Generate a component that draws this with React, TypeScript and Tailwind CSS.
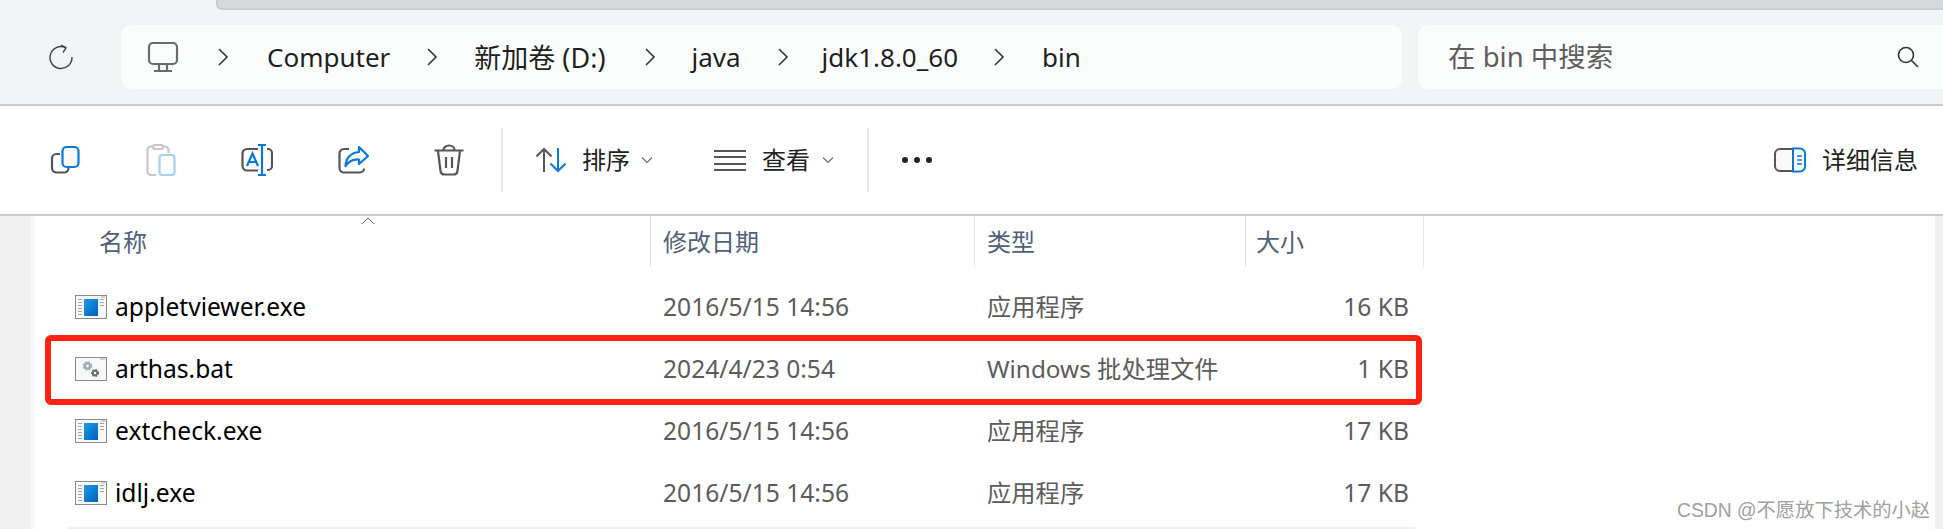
import React from "react";

const F = "font-['Noto_Sans','Noto_Sans_CJK_SC',sans-serif]";

const Chevron = ({ cls }: { cls: string }) => (
  <svg width="12" height="20" viewBox="0 0 12 20" className={cls} fill="none" stroke="#333" strokeWidth="1.6"><path d="M2 2 L10 10 L2 18" /></svg>
);
const Small = ({ cls }: { cls: string }) => (
  <svg width="12" height="8" viewBox="0 0 12 8" className={cls} fill="none" stroke="#666" strokeWidth="1.1"><path d="M1 1.5 L6 6.5 L11 1.5" /></svg>
);
const G = "#555";
const B = "#0a78d7";

const Copy = () => (
  <svg width="32" height="32" viewBox="0 0 32 32" fill="none" strokeWidth="2.2">
    <path d="M11 10 H7.5 a4.5 4.5 0 0 0 -4.5 4.5 V24 a4.5 4.5 0 0 0 4.5 4.5 H15 a4.5 4.5 0 0 0 4.5 -4.5" stroke={G} />
    <rect x="13.5" y="3" width="16" height="20" rx="4" stroke={B} fill="#fafafa" />
  </svg>
);
const Paste = () => (
  <svg width="32" height="32" viewBox="0 0 32 32" fill="none" strokeWidth="2.2">
    <path d="M11 31 H6 a3.5 3.5 0 0 1 -3.5 -3.5 V6 a3.5 3.5 0 0 1 3.5 -3.5 H20 a3.5 3.5 0 0 1 3.5 3.5 V9" stroke="#c6c6c6" />
    <rect x="8" y="1" width="10" height="4" rx="2" stroke="#c6c6c6" fill="#fff" />
    <rect x="14.5" y="11" width="15" height="20" rx="3" stroke="#a6cff2" />
  </svg>
);
const Rename = () => (
  <svg width="32" height="32" viewBox="0 0 32 32" fill="none" strokeWidth="2.2">
    <path d="M17 5 H6 a4.5 4.5 0 0 0 -4.5 4.5 V22 a4.5 4.5 0 0 0 4.5 4.5 H17" stroke={G} />
    <path d="M26 5 H27 a4 4 0 0 1 4 4 V22 a4 4 0 0 1 -4 4 H26" stroke={G} />
    <path d="M17 1 H25 M17 31 H25 M21 1 V31" stroke={B} />
    <path d="M6 22 L11.5 9.5 L17 22 M8 18 H15" stroke={B} />
  </svg>
);
const Share = () => (
  <svg width="32" height="32" viewBox="0 0 32 32" fill="none" strokeWidth="2.2">
    <path d="M12 5 H7 a4.5 4.5 0 0 0 -4.5 4.5 V24 a4.5 4.5 0 0 0 4.5 4.5 H23 a4 4 0 0 0 4 -4" stroke={G} />
    <path d="M22 3 L31 12 L22 20 V15.5 C16 15 12 17 8.5 22 C9 14 14 9 22 8 Z" stroke={B} strokeLinejoin="round" />
  </svg>
);
const Trash = () => (
  <svg width="32" height="32" viewBox="0 0 32 32" fill="none" stroke={G} strokeWidth="2.2">
    <path d="M1.5 6.5 H30.5 M10.5 6 a5.5 4.5 0 0 1 11 0" />
    <path d="M5 7 L7.5 27 a4 4 0 0 0 4 3.5 H20.5 a4 4 0 0 0 4 -3.5 L27 7" />
    <path d="M13 13 V24 M19 13 V24" />
  </svg>
);
const Sort = () => (
  <svg width="32" height="26" viewBox="0 0 32 26" fill="none" strokeWidth="2">
    <path d="M9 25 V2 M1.5 9.5 L9 2 L16.5 9.5" stroke={G} />
    <path d="M23 1 V24 M15.5 16.5 L23 24 L30.5 16.5" stroke={B} />
  </svg>
);
const ViewIcon = () => (
  <svg width="32" height="22" viewBox="0 0 32 22" fill="none" stroke={G} strokeWidth="2"><path d="M0 2 H32 M0 8 H32 M0 15 H32 M0 21 H32" /></svg>
);
const Details = () => (
  <svg width="32" height="26" viewBox="0 0 32 26" fill="none" strokeWidth="2">
    <path d="M19 2 H6 a5 5 0 0 0 -5 5 V19 a5 5 0 0 0 5 5 H19" stroke={G} fill="#fafafa" />
    <path d="M19 1.5 H26 a5 5 0 0 1 5 5 V19.5 a5 5 0 0 1 -5 5 H19 Z" stroke={B} />
    <path d="M23 9 H28 M23 13 H28 M23 17 H28" stroke={B} strokeWidth="1.6" />
  </svg>
);

const ExeIcon = () => (
  <svg width="32" height="24" viewBox="0 0 32 24" className="shrink-0">
    <defs><linearGradient id="e" x1="0" y1="0" x2="1" y2="1"><stop offset="0" stopColor="#1e9be8" /><stop offset="1" stopColor="#0060b8" /></linearGradient></defs>
    <rect x="0.5" y="0.5" width="31" height="23" fill="#f8f8f8" stroke="#8a8a8a" />
    <path d="M3 4.5 H7 M3 7.5 H7 M3 10.5 H7 M3 13.5 H7 M3 16.5 H7 M3 19.5 H7 M25 4.5 H29 M25 7.5 H29 M25 10.5 H29 M26 2 H30" stroke="#a5a5a5" strokeWidth="1" />
    <rect x="9" y="4" width="14" height="17" fill="url(#e)" />
  </svg>
);
const Gear = ({ x, y, r, c }: { x: number; y: number; r: number; c: string }) => (
  <g>
    <circle cx={x} cy={y} r={r * 0.65} fill="none" stroke={c} strokeWidth={r * 0.6} />
    <circle cx={x} cy={y} r={r} fill="none" stroke={c} strokeWidth={r * 0.4} strokeDasharray="1.6 1.6" />
  </g>
);
const BatIcon = () => (
  <svg width="32" height="24" viewBox="0 0 32 24" className="shrink-0">
    <rect x="0.5" y="0.5" width="31" height="23" fill="#f8f8f8" stroke="#8a8a8a" />
    <path d="M25 2 H30" stroke="#a5a5a5" />
    <Gear x={12.5} y={9} r={4} c="#a4a9ae" />
    <Gear x={20} y={16} r={3.4} c="#6a6e72" />
  </svg>
);

const rows = [
  ["appletviewer.exe", "2016/5/15 14:56", "应用程序", "16 KB", "exe"],
  ["arthas.bat", "2024/4/23 0:54", "Windows 批处理文件", "1 KB", "bat"],
  ["extcheck.exe", "2016/5/15 14:56", "应用程序", "17 KB", "exe"],
  ["idlj.exe", "2016/5/15 14:56", "应用程序", "17 KB", "exe"],
];

const Cols = "grid grid-cols-[615px_324px_271px_179px]";

export default function App() {
  return (
    <div className={`relative w-[1943px] h-[529px] overflow-hidden bg-white ${F}`}>
      {/* Top: address area */}
      <div className="h-[106px] bg-[#f3f4f6] border-b-2 border-[#c9cacd]">
        <div className="ml-[216px] h-[10px] bg-[#d5d9dc] border-b-2 border-l-2 border-[#c9cdd0] rounded-bl-[6px]" />
        <div className="flex items-center mt-[15px] h-[64px]">
          <svg width="26" height="26" viewBox="0 0 26 26" fill="none" stroke="#444" strokeWidth="1.4" className="ml-[48px] shrink-0">
            <path d="M17.5 3.5 A11 11 0 1 0 24 13" />
            <path d="M13 1 L18 3.8 L15 8.5" />
          </svg>
          <div className="flex items-center ml-[47px] w-[1281px] h-[64px] rounded-[10px] bg-[#fbfdfd] text-[#1f1f1f] text-[26px] leading-none">
            <svg width="32" height="32" viewBox="0 0 32 32" fill="none" stroke="#6b6b6b" strokeWidth="2.2" className="ml-[26px] shrink-0">
              <rect x="2" y="2" width="28" height="21" rx="4" />
              <path d="M12 23 V29 M20 23 V29 M7 30 H25" />
            </svg>
            <Chevron cls="ml-[38px] shrink-0" />
            <span className="ml-[38px]">Computer</span>
            <Chevron cls="ml-[36px] shrink-0" />
            <span className="ml-[36px] text-[27px]">新加卷 (D:)</span>
            <Chevron cls="ml-[38px] shrink-0" />
            <span className="ml-[36px]">java</span>
            <Chevron cls="ml-[36px] shrink-0" />
            <span className="ml-[33px]">jdk1.8.0_60</span>
            <Chevron cls="ml-[35px] shrink-0" />
            <span className="ml-[37px]">bin</span>
          </div>
          <div className="flex items-center justify-between ml-[16px] flex-1 h-[64px] rounded-l-[10px] bg-[#fbfdfd] pl-[30px] pr-[24px] text-[#5f5f5f] text-[27.5px] leading-none">
            <span>在 bin 中搜索</span>
            <svg width="22" height="22" viewBox="0 0 22 22" fill="none" stroke="#333" strokeWidth="1.6">
              <circle cx="9" cy="9" r="7.5" /><path d="M14.5 14.5 L21 21" />
            </svg>
          </div>
        </div>
      </div>

      {/* Toolbar */}
      <div className="flex items-center h-[110px] border-b-2 border-[#c9cacd] pl-[17px] pr-[25px] text-[#222] text-[24px] leading-none">
        {[<Copy />, <Paste />, <Rename />, <Share />, <Trash />].map((ic, i) => (
          <div key={i} className="w-[96px] flex justify-center">{ic}</div>
        ))}
        <div className="ml-[4px] w-[2px] h-[64px] bg-[#e8e8e8]" />
        <div className="ml-[32px]"><Sort /></div>
        <span className="ml-[15px]">排序</span>
        <Small cls="ml-[11px]" />
        <div className="ml-[61px]"><ViewIcon /></div>
        <span className="ml-[16px]">查看</span>
        <Small cls="ml-[12px]" />
        <div className="ml-[33px] w-[2px] h-[64px] bg-[#e8e8e8]" />
        <div className="ml-[33px] flex gap-[6px]">
          <i className="block w-[6px] h-[6px] rounded-full bg-[#222]" />
          <i className="block w-[6px] h-[6px] rounded-full bg-[#222]" />
          <i className="block w-[6px] h-[6px] rounded-full bg-[#222]" />
        </div>
        <div className="ml-auto"><Details /></div>
        <span className="ml-[16px]">详细信息</span>
      </div>

      {/* Content */}
      <div className="flex h-[313px]">
        <div className="w-[31px] bg-[#f0f0f0]" />
        <div className="w-[4px] bg-[#f9f9f9]" />
        <div className="relative flex-1">
          <svg width="14" height="8" viewBox="0 0 14 8" fill="none" stroke="#666" strokeWidth="1" className="absolute left-[326px] top-[1px]">
            <path d="M1 7 L7 1 L13 7" />
          </svg>
          <div className={`${Cols} h-[51px] text-[24px] leading-none text-[#4f6178]`}>
            <div className="flex items-center pl-[64px]">名称</div>
            <div className="flex items-center pl-[12px] border-l border-[#e5e5e5]">修改日期</div>
            <div className="flex items-center pl-[12px] border-l border-[#e5e5e5]">类型</div>
            <div className="flex items-center pl-[10px] border-x border-[#e5e5e5]">大小</div>
          </div>
          <div className="mt-[9px]">
            {rows.map((r) => (
              <div key={r[0]} className={`${Cols} h-[62px] items-center text-[24.6px] leading-none`}>
                <div className="flex items-center pl-[40px] text-black">
                  {r[4] === "exe" ? <ExeIcon /> : <BatIcon />}
                  <span className="ml-[8px]">{r[0]}</span>
                </div>
                <div className="pl-[13px] text-[#5c5c5c]">{r[1]}</div>
                <div className="pl-[13px] text-[#5c5c5c] text-[24.3px]">{r[2]}</div>
                <div className="pr-[15px] text-right text-[#5c5c5c]">{r[3]}</div>
              </div>
            ))}
          </div>
          <div className="mt-[3px] ml-[32px] w-[1348px] h-[10px] bg-[#e6f3fb]" />
          {/* Red annotation box */}
          <div className="absolute left-[10px] top-[119px] w-[1377px] h-[70px] border-[6px] border-[#ff2212] rounded-[6px]" />
        </div>
        <div className="w-[8px] bg-[#f0f0f0]" />
      </div>

      {/* Watermark */}
      <div className="absolute left-[1677px] top-[501px] text-[19.3px] leading-[20px] text-[#a0a0a0] whitespace-nowrap font-['Liberation_Sans','Noto_Sans_CJK_SC',sans-serif]">
        CSDN @不愿放下技术的小赵
      </div>
    </div>
  );
}
